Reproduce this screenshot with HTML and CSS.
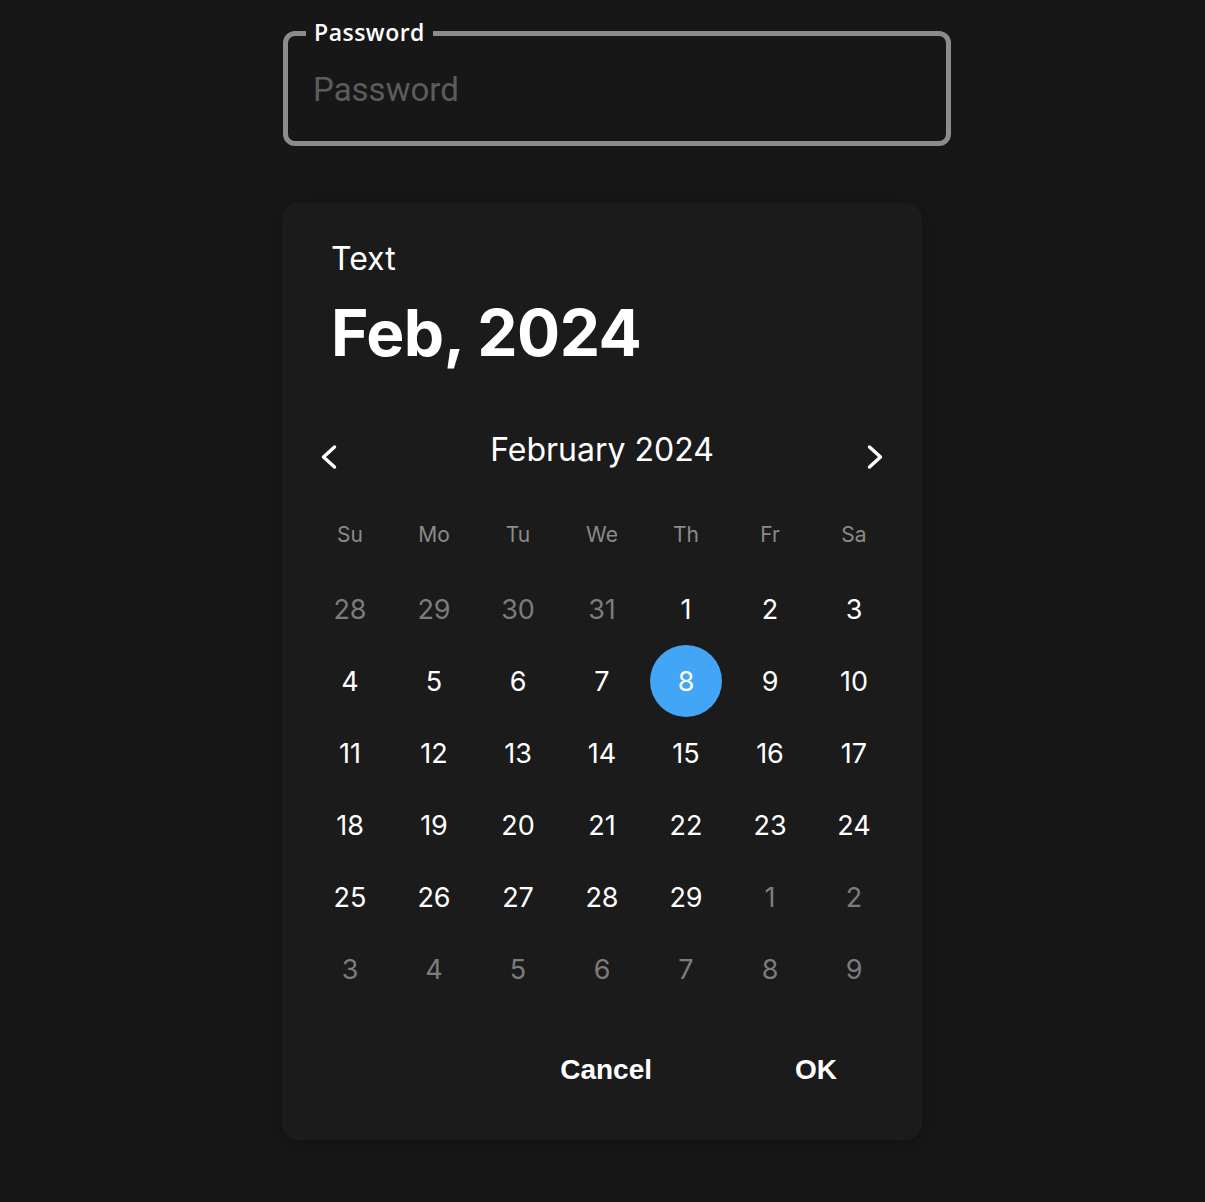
FILE: index.html
```html
<!DOCTYPE html>
<html lang="en">
<head>
<meta charset="utf-8">
<title>Date picker</title>
<link rel="stylesheet" href="styles.css">
</head>
<body>
<div class="page">
  <div class="field">
    <span class="field-label">Password</span>
    <span class="field-placeholder">Password</span>
  </div>

  <div class="picker">
    <div class="picker-head">
      <div class="picker-title">Text</div>
      <div class="picker-date">Feb, 2024</div>
    </div>

    <div class="nav">
      <button class="nav-btn" aria-label="Previous month">
        <svg width="18" height="26" viewBox="0 0 18 26"><path d="M14.5 3 L3.5 13 L14.5 23" fill="none" stroke="#fff" stroke-width="3.4" stroke-linecap="round" stroke-linejoin="round"/></svg>
      </button>
      <div class="nav-month">February 2024</div>
      <button class="nav-btn" aria-label="Next month">
        <svg width="18" height="26" viewBox="0 0 18 26"><path d="M3.5 3 L14.5 13 L3.5 23" fill="none" stroke="#fff" stroke-width="3.4" stroke-linecap="round" stroke-linejoin="round"/></svg>
      </button>
    </div>

    <div class="weekdays">
      <span>Su</span><span>Mo</span><span>Tu</span><span>We</span><span>Th</span><span>Fr</span><span>Sa</span>
    </div>

    <div class="days">
      <span class="day muted">28</span><span class="day muted">29</span><span class="day muted">30</span><span class="day muted">31</span><span class="day">1</span><span class="day">2</span><span class="day">3</span>
      <span class="day">4</span><span class="day">5</span><span class="day">6</span><span class="day">7</span><span class="day selected">8</span><span class="day">9</span><span class="day">10</span>
      <span class="day">11</span><span class="day">12</span><span class="day">13</span><span class="day">14</span><span class="day">15</span><span class="day">16</span><span class="day">17</span>
      <span class="day">18</span><span class="day">19</span><span class="day">20</span><span class="day">21</span><span class="day">22</span><span class="day">23</span><span class="day">24</span>
      <span class="day">25</span><span class="day">26</span><span class="day">27</span><span class="day">28</span><span class="day">29</span><span class="day muted">1</span><span class="day muted">2</span>
      <span class="day muted">3</span><span class="day muted">4</span><span class="day muted">5</span><span class="day muted">6</span><span class="day muted">7</span><span class="day muted">8</span><span class="day muted">9</span>
    </div>

    <div class="actions">
      <button class="action">Cancel</button>
      <button class="action">OK</button>
    </div>
  </div>
</div>
</body>
</html>
```

FILE: styles.css
```css
* { box-sizing: border-box; }

html, body {
  margin: 0;
  background: #171717;
}

body {
  font-family: Inter, "Noto Sans", sans-serif;
  color: #ffffff;
}

.page {
  padding: 31px 0 40px 282px;
  display: flex;
  flex-direction: column;
  align-items: flex-start;
}

.field {
  position: relative;
  margin-left: 1px;
  width: 668px;
  height: 115px;
  border: 5px solid #8c8c8c;
  border-radius: 12px;
  padding-left: 25px;
  display: flex;
  align-items: center;
}

.field-label {
  position: absolute;
  top: -18px;
  left: 18px;
  padding: 0 8px 0 8px;
  background: #171717;
  font-family: "Open Sans", "DejaVu Sans", sans-serif;
  font-weight: 600;
  font-size: 23px;
  letter-spacing: 0.5px;
  line-height: 28px;
  color: #ffffff;
}

.field-placeholder {
  font-family: Roboto, "Liberation Sans", sans-serif;
  font-size: 33px;
  line-height: 38px;
  color: #5c5c5c;
  margin-top: 2px;
}

.picker {
  margin-top: 57px;
  width: 640px;
  height: 937px;
  background: #1b1b1b;
  border-radius: 16px;
  box-shadow: 0 4px 24px rgba(0, 0, 0, 0.25);
  padding: 36px 26px 0 26px;
  display: flex;
  flex-direction: column;
}

.picker-head {
  padding-left: 23px;
}

.picker-title {
  font-size: 32px;
  line-height: 40px;
  font-weight: 400;
}

.picker-date {
  margin-top: 18px;
  font-size: 64px;
  line-height: 72px;
  font-weight: 700;
  letter-spacing: -0.5px;
}

.nav {
  margin-top: 62px;
  height: 48px;
  display: flex;
  align-items: center;
  justify-content: space-between;
}

.nav-btn {
  background: none;
  border: 0;
  padding: 0;
  width: 42px;
  height: 42px;
  display: flex;
  align-items: center;
  justify-content: center;
  margin-top: 3px;
}

.nav-month {
  font-size: 32px;
  line-height: 36px;
  font-weight: 400;
  margin-top: -10px;
}

.weekdays {
  margin-top: 19px;
  display: grid;
  grid-template-columns: repeat(7, 84px);
  height: 72px;
  align-items: center;
  justify-items: center;
  font-size: 21px;
  color: #8a8a8a;
}

.days {
  margin-top: 3px;
  display: grid;
  grid-template-columns: repeat(7, 84px);
  grid-auto-rows: 72px;
  align-items: center;
  justify-items: center;
}

.day {
  width: 72px;
  height: 72px;
  border-radius: 50%;
  display: flex;
  align-items: center;
  justify-content: center;
  font-size: 27px;
  color: #ffffff;
}

.day.muted { color: #7c7c7c; }

.day.selected {
  background: #42a5f5;
  color: #ffffff;
}

.actions {
  margin-top: 37px;
  display: flex;
  justify-content: flex-end;
  gap: 71px;
  padding-right: 23px;
}

.action {
  background: none;
  border: 0;
  height: 56px;
  padding: 0 36px;
  font-family: "Liberation Sans", Arial, sans-serif;
  font-weight: 700;
  font-size: 28px;
  color: #ffffff;
}
```
